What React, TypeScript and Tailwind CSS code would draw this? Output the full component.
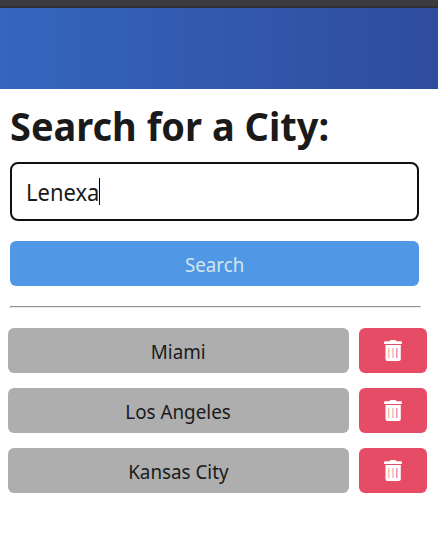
const cities = ["Miami", "Los Angeles", "Kansas City"];

function TrashIcon() {
  return (
    <svg width="18" height="21" viewBox="0 0 18 21" aria-hidden="true">
      <path
        fill="white"
        d="M1 1.3h4.3L6 .4Q6.3 0 6.8 0h4.4q.5 0 .8.4l.7.9H17q.9 0 .9.8v1.3q0 .6-.5.6H.6q-.5 0-.5-.6V2.1q0-.8.9-.8Z"
      />
      <path fill="white" d="M1.5 5h15.3v14.1q0 1.9-1.9 1.9H3.4q-1.9 0-1.9-1.9Z" />
      <path fill="#f3ab9c" d="M4.2 8h1.1v10H4.2Z" />
      <path fill="#f2a48c" d="M8.4 8h1.1v10H8.4Z" />
      <path fill="#e665a4" d="M12.3 8h1.1v10h-1.1Z" />
    </svg>
  );
}

export default function App() {
  return (
    <div className="h-[546px] w-[438px] overflow-hidden bg-white font-['Noto_Sans','Open_Sans',sans-serif] text-[#1a1a1a]">
      <div className="h-2 border-b-2 border-[#303032] bg-[#3c3b3f]" />
      <header className="h-[81px] bg-linear-to-r from-[#3466be] to-[#2f4c9e]" />
      <main className="px-[10px] pt-[13px]">
        <h1 className="h-[60px] text-[40px] leading-[48px] font-bold whitespace-nowrap">
          <span className="inline-block origin-left scale-x-[0.949]">Search for a City:</span>
        </h1>
        <div className="flex h-[59px] w-[409px] items-center rounded-[8px] border-2 border-[#101010] px-[14px] text-2xl">
          <span className="w-[73px] origin-left scale-x-[0.915] pt-px whitespace-nowrap">Lenexa</span>
          <span className="h-[27px] w-px bg-black" />
        </div>
        <button className="mt-5 flex h-[45px] w-[409px] items-center justify-center rounded-[6px] bg-[#5098e6] pt-[2px] text-[20px] text-[#d4e6ea]">
          <span className="scale-x-[0.935]">Search</span>
        </button>
        <hr className="mt-5 h-[2px] w-[411px] border border-t-[#929292] border-r-[#eeeeee] border-b-[#eeeeee] border-l-[#929292]" />
        <ul className="-mx-[2px] mt-5 flex flex-col gap-[15px]">
          {cities.map((city) => (
            <li key={city} className="flex h-[45px] gap-[10px]">
              <button className="flex w-[341px] items-center justify-center rounded-[6px] bg-[#aeaeae] pt-[2px] text-[20px]">
                <span className="scale-x-[0.94]">{city}</span>
              </button>
              <button aria-label={`Delete ${city}`} className="flex w-[68px] items-center justify-center rounded-[6px] bg-[#e74c66]">
                <TrashIcon />
              </button>
            </li>
          ))}
        </ul>
      </main>
    </div>
  );
}
